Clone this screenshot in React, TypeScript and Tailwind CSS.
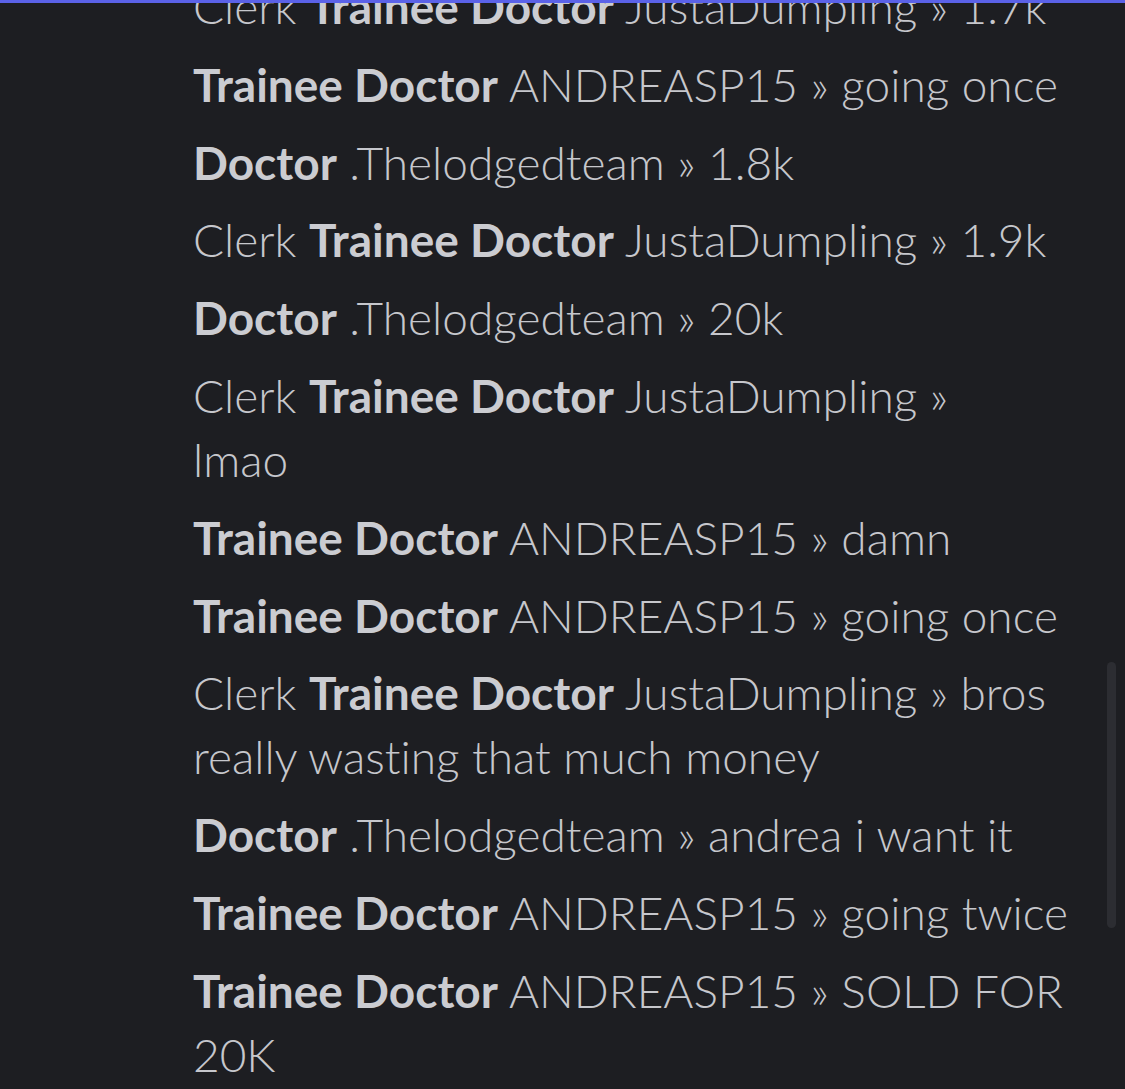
const messages: { clerk?: boolean; role: string; name: string; text: string; wrap?: boolean }[] = [
    { clerk: true, role: "Trainee Doctor", name: "JustaDumpling", text: "1.7k" },
    { role: "Trainee Doctor", name: "ANDREASP15", text: "going once" },
    { role: "Doctor", name: ".Thelodgedteam", text: "1.8k" },
    { clerk: true, role: "Trainee Doctor", name: "JustaDumpling", text: "1.9k" },
    { role: "Doctor", name: ".Thelodgedteam", text: "20k" },
    { clerk: true, role: "Trainee Doctor", name: "JustaDumpling", text: "lmao", wrap: true },
    { role: "Trainee Doctor", name: "ANDREASP15", text: "damn" },
    { role: "Trainee Doctor", name: "ANDREASP15", text: "going once" },
    { clerk: true, role: "Trainee Doctor", name: "JustaDumpling", text: "bros really wasting that much money" },
    { role: "Doctor", name: ".Thelodgedteam", text: "andrea i want it" },
    { role: "Trainee Doctor", name: "ANDREASP15", text: "going twice" },
    { role: "Trainee Doctor", name: "ANDREASP15", text: "SOLD FOR 20K" },
];

export default function App() {
    return (
        <div className="relative h-[1089px] w-[1125px] overflow-hidden bg-[#1d1e22] font-['Lato',sans-serif] [font-variant-ligatures:none]">
            <div className="absolute left-0 right-0 top-0 z-10 h-[3px] bg-[#5b62e8]" />
            <div className="-mt-[25px] flex flex-col gap-[13.8px] pl-[193px] pr-[30px]">
                {messages.map((m, i) => (
                    <p key={i} className="text-[46px] font-light leading-[64px] text-[#c6c7cc]">
                        {m.clerk && "Clerk "}
                        <span className="font-bold text-[#cbccd1]">{m.role}</span> {m.name} »{" "}
                        {m.wrap && <br />}
                        {m.text}
                    </p>
                ))}
            </div>
            <div className="absolute left-[1107px] top-[662px] h-[266px] w-[9px] rounded-full bg-[#2c2d32]" />
        </div>
    );
}
